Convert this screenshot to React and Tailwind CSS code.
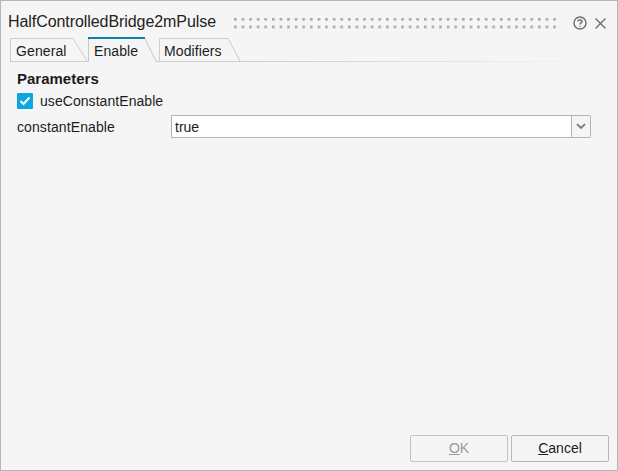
import React from "react";

const font = "font-['Liberation_Sans',Arial,sans-serif]";

function Tab({ width, slant, label, active, textLeft }) {
  const w = width;
  const h = active ? 25 : 24;
  return (
    <div className="relative h-[24px] shrink-0" style={{ width: w }}>
      <svg className="absolute left-0 bottom-0 overflow-visible" width={w} height={h} fill="none">
        {active ? (
          <>
            <path d={`M0.5 ${h} V1.5`} stroke="#c8c8c8" />
            <path d={`M${w - slant} 2 L${w - 0.5} ${h}`} stroke="#c8c8c8" />
            <path d={`M0 1 H${w - slant}`} stroke="#0b7fa5" strokeWidth="2" />
          </>
        ) : (
          <path d={`M0.5 ${h} V0.5 H${w - slant} L${w - 0.5} ${h - 0.5} H0.5`} stroke="#cccccc" />
        )}
      </svg>
      <span
        className="absolute top-[3px] text-[14px] leading-[20px] tracking-[0.1px] text-[#1c1c1c]"
        style={{ left: textLeft }}
      >
        {label}
      </span>
    </div>
  );
}

function Grip() {
  return (
    <svg width="326" height="11" className="block mt-[3px]">
      <defs>
        <pattern id="grip" width="7.6" height="7.6" patternUnits="userSpaceOnUse">
          <rect x="0" y="0" width="2.6" height="2.6" fill="#a8a8a8" />
        </pattern>
      </defs>
      <rect width="326" height="11" fill="url(#grip)" />
    </svg>
  );
}

export default function App() {
  return (
    <div className={`${font} w-[618px] h-[471px] bg-[#f5f5f5] border border-[#b5b5b5] flex flex-col text-[#1c1c1c] overflow-hidden`}>
      <div className="h-[36px] shrink-0 flex items-center pt-[6px] pl-[7px] pr-[10px]">
        <span className="text-[16px] leading-[22px] tracking-[-0.07px] w-[226px] shrink-0 whitespace-nowrap text-[#222222]">HalfControlledBridge2mPulse</span>
        <Grip />
        <div className="ml-[14px] mt-[2px] flex items-center gap-[7px]">
          <svg width="14" height="14" viewBox="0 0 14 14" fill="none" stroke="#6e6e6e" strokeWidth="1.4">
            <circle cx="7" cy="7" r="6" />
            <path d="M5 5.6 C5 3.4 9 3.4 9 5.6 C9 7 7 6.9 7 8.5" />
            <circle cx="7" cy="10.4" r="0.7" fill="#6e6e6e" stroke="none" />
          </svg>
          <svg width="13" height="13" viewBox="0 0 13 13" fill="none" stroke="#6e6e6e" strokeWidth="1.4">
            <path d="M1.5 1.5 L11.5 11.5 M11.5 1.5 L1.5 11.5" />
          </svg>
        </div>
      </div>

      <div className="relative h-[25px] shrink-0 flex items-end pl-[9px]">
        <Tab width={78} slant={15} label="General" textLeft={6} />
        <Tab width={69} slant={12} label="Enable" active textLeft={6} />
        <div className="w-[2px] shrink-0 border-b border-[#cccccc] h-[24px]" />
        <Tab width={82} slant={13} label="Modifiers" textLeft={5} />
        <div className="w-[360px] h-[1px] bg-gradient-to-r from-[#cccccc] to-[#f5f5f5]" />
      </div>

      <div className="flex-1 pl-[16px] pr-[26px] pt-[8px]">
        <div className="text-[15px] leading-[18px] font-bold text-[#1c1c1c]">Parameters</div>
        <label className="mt-[4px] flex items-center h-[18px]">
          <span className="w-[16px] h-[16px] bg-[#0ea5e3] rounded-[1px] flex items-center justify-center">
            <svg width="12" height="10" viewBox="0 0 12 10" fill="none" stroke="#ffffff" strokeWidth="2">
              <path d="M1.5 5 L4.5 8 L10.5 1.5" />
            </svg>
          </span>
          <span className="ml-[7px] text-[14px] leading-[18px] tracking-[0.06px]">useConstantEnable</span>
        </label>
        <div className="mt-[5px] flex items-center h-[23px]">
          <span className="w-[154px] shrink-0 text-[14px] leading-[18px] tracking-[0.1px]">constantEnable</span>
          <div className="w-[401px] h-[23px] bg-white border border-[#b4b4b4] text-[14px] leading-[22px] pl-[3px]">true</div>
          <div className="w-[19px] h-[23px] border border-l-0 border-[#b4b4b4] rounded-r-[2px] flex items-center justify-center">
            <svg width="10" height="7" viewBox="0 0 10 7" fill="none" stroke="#777777" strokeWidth="1.8">
              <path d="M1 1.2 L5 5 L9 1.2" />
            </svg>
          </div>
        </div>
      </div>

      <div className="shrink-0 flex justify-end gap-[3px] pr-[8px] pb-[8px]">
        <button className="w-[98px] h-[27px] border border-[#c2c2c2] rounded-[2px] text-[14px] text-[#9a9a9a]"><u>O</u>K</button>
        <button className="w-[98px] h-[27px] border border-[#b8b8b8] rounded-[2px] text-[14px] text-[#1c1c1c]"><u>C</u>ancel</button>
      </div>
    </div>
  );
}
